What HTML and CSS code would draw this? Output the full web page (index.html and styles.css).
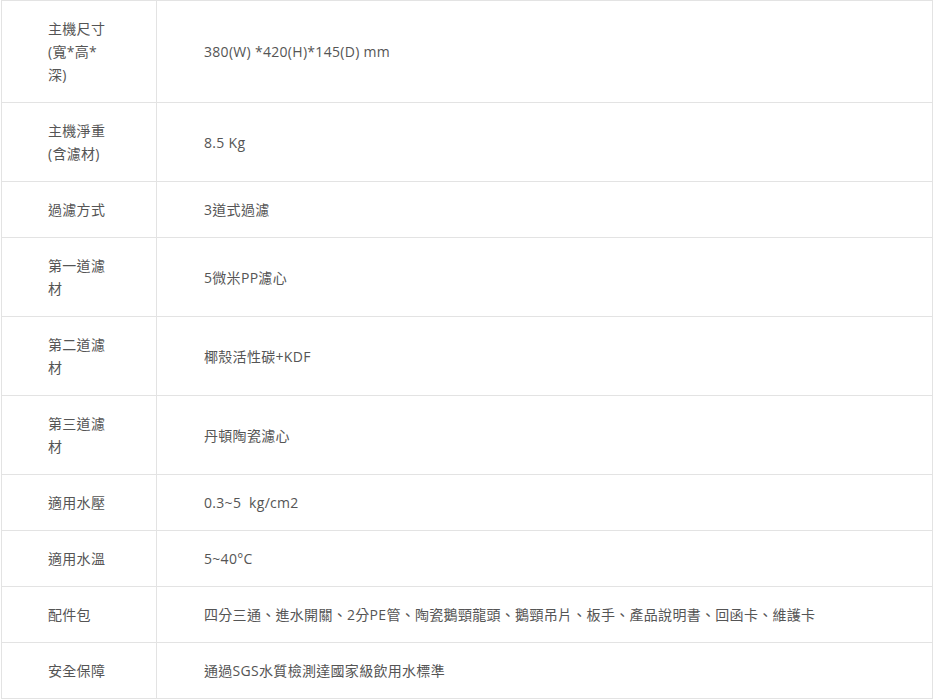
FILE: index.html
```html
<!DOCTYPE html>
<html lang="zh-Hant">
<head>
<meta charset="utf-8">
<title>規格</title>
<link rel="stylesheet" href="styles.css">
</head>
<body>
<div class="wrap">
<table class="spec">
<colgroup><col class="c1"><col class="c2"></colgroup>
<tbody>
<tr><td class="label">主機尺寸(寬*高*深)</td><td class="value">380(W) *420(H)*145(D) mm</td></tr>
<tr><td class="label">主機淨重(含濾材)</td><td class="value">8.5 Kg</td></tr>
<tr><td class="label">過濾方式</td><td class="value">3道式過濾</td></tr>
<tr><td class="label">第一道濾材</td><td class="value">5微米PP濾心</td></tr>
<tr><td class="label">第二道濾材</td><td class="value">椰殼活性碳+KDF</td></tr>
<tr><td class="label">第三道濾材</td><td class="value">丹頓陶瓷濾心</td></tr>
<tr><td class="label">適用水壓</td><td class="value">0.3~5&nbsp; kg/cm2</td></tr>
<tr><td class="label">適用水溫</td><td class="value">5~40°C</td></tr>
<tr><td class="label">配件包</td><td class="value">四分三通、進水開關、2分PE管、陶瓷鵝頸龍頭、鵝頸吊片、板手、產品說明書、回函卡、維護卡</td></tr>
<tr><td class="label">安全保障</td><td class="value">通過SGS水質檢測達國家級飲用水標準</td></tr>
</tbody>
</table>
</div>
</body>
</html>
```
FILE: styles.css
```css
html, body {
  margin: 0;
  padding: 0;
  background: #fff;
}
.wrap {
  padding: 0 1px;
}
.spec {
  width: 100%;
  border-collapse: collapse;
  table-layout: fixed;
  font-family: "Open Sans", "Noto Sans CJK TC", sans-serif;
  font-size: 14px;
  line-height: 23px;
  color: #555;
  letter-spacing: 0.3px;
}
.c1 { width: 155px; }
.spec td {
  border: 1px solid #e3e3e3;
  padding: 16px 48px 16px 47px;
  vertical-align: middle;
  text-align: left;
}
.spec td.label {
  padding-left: 46px;
  padding-right: 49px;
}
```
